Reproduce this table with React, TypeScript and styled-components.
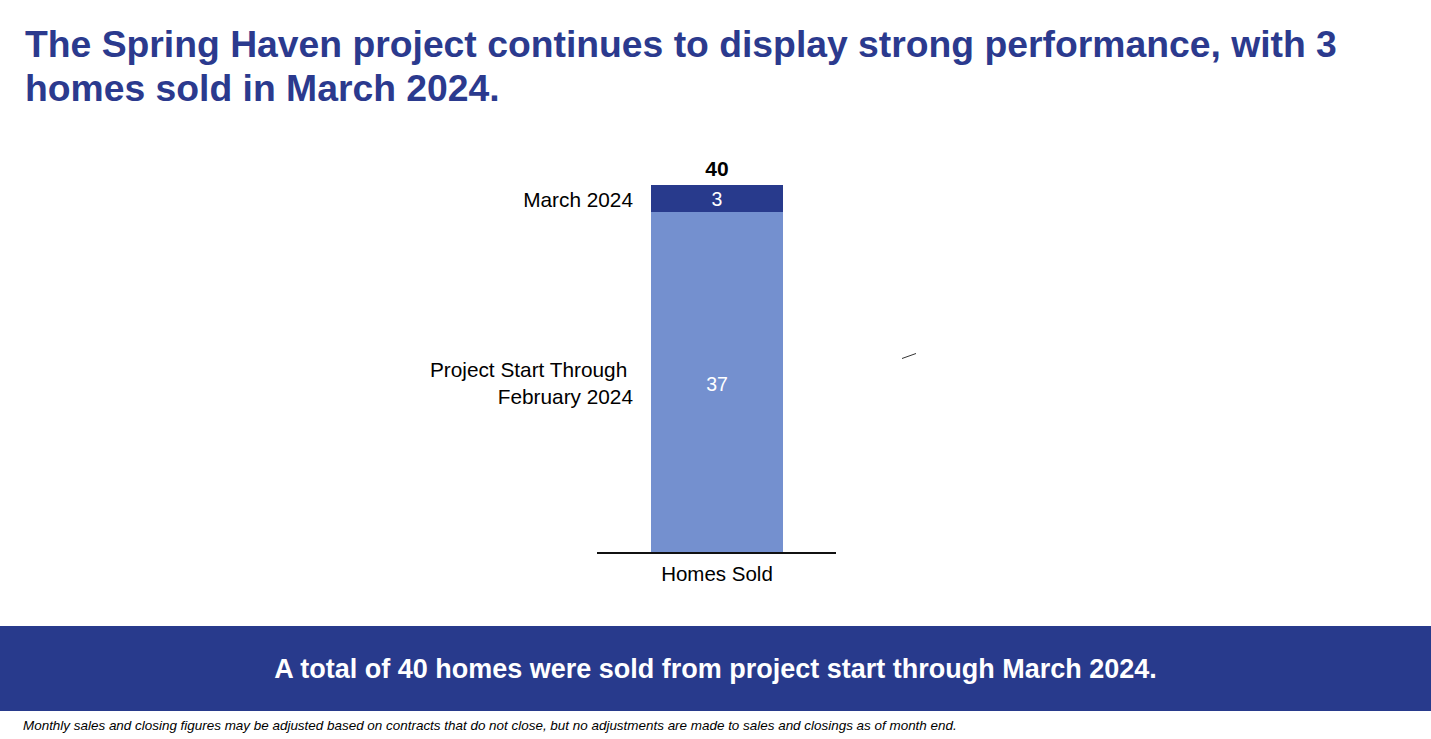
import React from "react";
import styled, { createGlobalStyle } from "styled-components";

const GlobalStyle = createGlobalStyle`
  html, body {
    margin: 0;
    padding: 0;
    background: #ffffff;
  }
  body {
    font-family: "Liberation Sans", Arial, sans-serif;
    color: #000000;
  }
`;

const NAVY = "#283a8c";
const LIGHT = "#7490cf";

const Page = styled.div`
  display: flex;
  flex-direction: column;
  width: 1431px;
  height: 739px;
  overflow: hidden;
`;

const Title = styled.h1`
  margin: 0;
  padding: 22px 60px 0 25px;
  font-size: 37.3px;
  line-height: 44px;
  font-weight: 700;
  color: #2b3a8e;
`;

const ChartGrid = styled.div`
  flex: 1;
  display: grid;
  grid-template-columns: 1fr 132px 1fr;
  grid-template-rows: 75px 27px 340px auto auto;
  align-content: start;
  column-gap: 18px;
  padding-left: 3px;
`;

const Total = styled.div`
  grid-column: 2;
  grid-row: 1;
  align-self: end;
  text-align: center;
  font-size: 21px;
  font-weight: 700;
  line-height: 24px;
  padding-bottom: 4px;
`;

const SegmentLabel = styled.div<{ $row: number }>`
  grid-column: 1;
  grid-row: ${(p) => p.$row};
  align-self: center;
  text-align: right;
  font-size: 20.8px;
  line-height: 27px;
  white-space: pre;
  position: relative;
  top: 1px;
`;

const Segment = styled.div<{ $row: number; $color: string }>`
  grid-column: 2;
  grid-row: ${(p) => p.$row};
  background: ${(p) => p.$color};
  display: flex;
  align-items: center;
  justify-content: center;
  color: #ffffff;
  font-size: 19.5px;
`;

const SegmentValue = styled.span<{ $shift?: number }>`
  position: relative;
  top: ${(p) => p.$shift ?? 0}px;
`;

const Axis = styled.div`
  grid-column: 2;
  grid-row: 4;
  margin: 0 -53px 0 -54px;
  border-top: 2px solid #111111;
`;

const Category = styled.div`
  grid-column: 2;
  grid-row: 5;
  text-align: center;
  white-space: nowrap;
  font-size: 20.5px;
  line-height: 24px;
  padding-top: 8px;
`;

const Stray = styled.svg`
  grid-column: 3;
  grid-row: 3;
  margin: 140px 0 0 100px;
  width: 16px;
  height: 8px;
`;

const Band = styled.div`
  height: 85px;
  background: ${NAVY};
  display: flex;
  align-items: center;
  justify-content: center;
  color: #ffffff;
  font-size: 27px;
  font-weight: 700;
  padding-top: 2px;
  box-sizing: border-box;
`;

const Footnote = styled.div`
  height: 28px;
  display: flex;
  align-items: center;
  padding-left: 23px;
  font-size: 13.45px;
  font-style: italic;
`;

export default function App() {
  return (
    <Page>
      <GlobalStyle />
      <Title>
        The Spring Haven project continues to display strong performance, with 3
        homes sold in March 2024.
      </Title>
      <ChartGrid>
        <Total>40</Total>
        <SegmentLabel $row={2}>March 2024</SegmentLabel>
        <Segment $row={2} $color={NAVY}>
          <SegmentValue $shift={1}>3</SegmentValue>
        </Segment>
        <SegmentLabel $row={3}>
          {"Project Start Through \nFebruary 2024"}
        </SegmentLabel>
        <Segment $row={3} $color={LIGHT}>
          <SegmentValue $shift={2}>37</SegmentValue>
        </Segment>
        <Stray viewBox="0 0 16 8">
          <line x1="1" y1="6.5" x2="15" y2="1.5" stroke="#333333" strokeWidth="1" />
        </Stray>
        <Axis />
        <Category>Homes Sold</Category>
      </ChartGrid>
      <Band>A total of 40 homes were sold from project start through March 2024.</Band>
      <Footnote>
        Monthly sales and closing figures may be adjusted based on contracts that do not close, but no
        adjustments are made to sales and closings as of month end.
      </Footnote>
    </Page>
  );
}
